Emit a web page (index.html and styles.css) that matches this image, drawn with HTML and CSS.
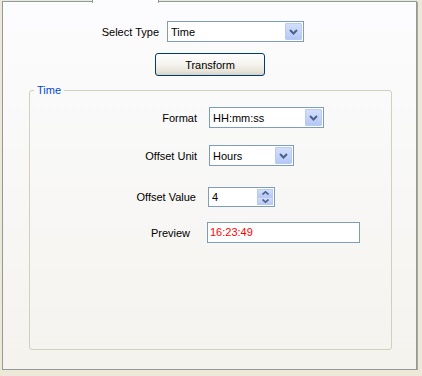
FILE: index.html
```html
<!DOCTYPE html>
<html>
<head>
  <title>Transform</title>
  <link rel="stylesheet" href="styles.css">
</head>
<body>
  <div class="tabpage">
    <span class="tab"></span>

    <div class="type-row">
      <label class="type-label">Select Type</label>
      <div class="combo combo-type">
        <span class="combo-text">Time</span>
        <span class="combo-btn">
          <svg width="9" height="6" viewBox="0 0 9 6"><path d="M1 1 L4.5 4.5 L8 1" fill="none" stroke="#4d6185" stroke-width="2"/></svg>
        </span>
      </div>
    </div>

    <div class="action-row">
      <button class="btn">Transform</button>
    </div>

    <fieldset class="group">
      <legend>Time</legend>

      <div class="field field-format">
        <label>Format</label>
        <div class="combo combo-format">
          <span class="combo-text">HH:mm:ss</span>
          <span class="combo-btn">
            <svg width="9" height="6" viewBox="0 0 9 6"><path d="M1 1 L4.5 4.5 L8 1" fill="none" stroke="#4d6185" stroke-width="2"/></svg>
          </span>
        </div>
      </div>

      <div class="field field-unit">
        <label>Offset Unit</label>
        <div class="combo combo-unit">
          <span class="combo-text">Hours</span>
          <span class="combo-btn">
            <svg width="9" height="6" viewBox="0 0 9 6"><path d="M1 1 L4.5 4.5 L8 1" fill="none" stroke="#4d6185" stroke-width="2"/></svg>
          </span>
        </div>
      </div>

      <div class="field field-value">
        <label>Offset Value</label>
        <div class="spinner">
          <span class="spin-text">4</span>
          <span class="spin-btns">
            <span class="spin-btn">
              <svg width="7" height="4" viewBox="0 0 7 4"><path d="M0.5 3.5 L3.5 0.8 L6.5 3.5" fill="none" stroke="#4d6185" stroke-width="1.6"/></svg>
            </span>
            <span class="spin-btn">
              <svg width="7" height="4" viewBox="0 0 7 4"><path d="M0.5 0.5 L3.5 3.2 L6.5 0.5" fill="none" stroke="#4d6185" stroke-width="1.6"/></svg>
            </span>
          </span>
        </div>
      </div>

      <div class="field field-preview">
        <label>Preview</label>
        <div class="textbox">16:23:49</div>
      </div>
    </fieldset>
  </div>
</body>
</html>
```

FILE: styles.css
```css
body {
  margin: 0;
  padding: 1px 0 0 2px;
  background: #ece9d8;
  font-family: 'Liberation Sans', Arial, sans-serif;
  font-size: 11px;
  color: #000;
}

.tabpage {
  position: relative;
  box-sizing: border-box;
  width: 415px;
  height: 369px;
  border: 1px solid #919b9c;
  box-shadow: 1px 1px 0 #aca899;
  background: linear-gradient(180deg, #fcfcfe 0%, #f4f3ee 100%);
}

.tab {
  position: absolute;
  top: -2px;
  left: 89px;
  width: 65px;
  height: 3px;
  border-left: 1px solid #919b9c;
  border-right: 1px solid #919b9c;
  background: #fcfcfe;
}

.type-row {
  display: flex;
  align-items: center;
  margin-top: 19px;
  height: 21px;
}

.type-label {
  width: 156px;
  text-align: right;
  margin-right: 8px;
}

/* combo boxes */
.combo {
  box-sizing: border-box;
  display: flex;
  align-items: center;
  justify-content: space-between;
  height: 21px;
  border: 1px solid #7f9db9;
  background: #fff;
  padding: 1px;
}

.combo-type { width: 137px; }
.combo-format { width: 115px; }
.combo-unit { width: 85px; }

.combo-text {
  padding-left: 2px;
}

.combo-btn {
  box-sizing: border-box;
  display: flex;
  align-items: center;
  justify-content: center;
  width: 17px;
  height: 17px;
  border: 1px solid #b9cbf3;
  border-radius: 1px;
  background: linear-gradient(180deg, #d3defc 0%, #c1d2fb 60%, #b4c8f7 100%);
}

.action-row {
  margin-top: 11px;
  padding-left: 152px;
}

.btn {
  box-sizing: border-box;
  width: 110px;
  height: 23px;
  border: 1px solid #003c74;
  border-radius: 3px;
  background: linear-gradient(180deg, #ffffff 0%, #f4f3ee 50%, #e6e3d6 85%, #d6d0c5 100%);
  font-family: inherit;
  font-size: 11px;
  color: #000;
  padding: 0;
}

/* group box */
.group {
  box-sizing: border-box;
  margin: 8px 0 0 26px;
  width: 363px;
  height: 266px;
  padding: 0;
  border: 1px solid #d0d0bf;
  border-radius: 3px;
}

.group legend {
  margin-left: 4px;
  padding: 0 3px;
  line-height: 13px;
  color: #0046d5;
}

.field {
  display: flex;
  align-items: center;
}

.field label {
  box-sizing: border-box;
  width: 168px;
  text-align: right;
  padding-right: 1px;
  margin-right: 11px;
}

.field-format { margin-top: 10px; }
.field-unit { margin-top: 17px; }
.field-value { margin-top: 21px; }
.field-preview { margin-top: 15px; }

.field-value label {
  padding-right: 2px;
  margin-right: 10px;
}

.field-preview label {
  padding-right: 8px;
  margin-right: 9px;
}

/* numeric spinner */
.spinner {
  box-sizing: border-box;
  display: flex;
  align-items: center;
  justify-content: space-between;
  width: 67px;
  height: 20px;
  border: 1px solid #7f9db9;
  background: #fff;
  padding: 1px;
}

.spin-text {
  padding-left: 2px;
}

.spin-btns {
  display: flex;
  flex-direction: column;
  height: 16px;
}

.spin-btn {
  box-sizing: border-box;
  display: flex;
  align-items: center;
  justify-content: center;
  width: 16px;
  height: 8px;
  border: 1px solid #b9cbf3;
  background: linear-gradient(180deg, #d3defc 0%, #c1d2fb 60%, #b4c8f7 100%);
}

.textbox {
  box-sizing: border-box;
  width: 153px;
  height: 21px;
  line-height: 19px;
  border: 1px solid #7f9db9;
  background: #fff;
  padding-left: 2px;
  color: #ff0000;
}
```
